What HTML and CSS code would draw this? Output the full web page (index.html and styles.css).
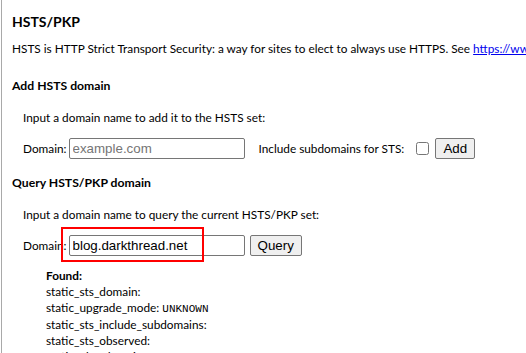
FILE: index.html
```html
<!DOCTYPE html>
<html>
<head>
<meta charset="utf-8">
<link rel="stylesheet" href="styles.css">
</head>
<body>
<div class="panel">
  <h2 class="title">HSTS/PKP</h2>
  <p class="desc">HSTS is HTTP Strict Transport Security: a way for sites to elect to always use HTTPS. See <a href="#">https://www.chromium.org/hsts</a></p>

  <section class="section">
    <h3 class="heading">Add HSTS domain</h3>
    <div class="body">
      <p class="hint">Input a domain name to add it to the HSTS set:</p>
      <div class="row">
        <span class="label">Domain:</span>
        <input class="field" type="text" placeholder="example.com">
        <span class="label label-gap">Include subdomains for STS:</span>
        <input class="check" type="checkbox">
        <button class="btn btn-add">Add</button>
      </div>
    </div>
  </section>

  <section class="section">
    <h3 class="heading">Query HSTS/PKP domain</h3>
    <div class="body">
      <p class="hint">Input a domain name to query the current HSTS/PKP set:</p>
      <div class="row row-query">
        <span class="label">Domain:</span>
        <input class="field" type="text" value="blog.darkthread.net">
        <button class="btn btn-query">Query</button>
        <div class="highlight"></div>
      </div>
      <div class="found">
        <div class="found-title">Found:</div>
        <div>static_sts_domain:</div>
        <div>static_upgrade_mode: <span class="mono">UNKNOWN</span></div>
        <div>static_sts_include_subdomains:</div>
        <div>static_sts_observed:</div>
        <div>static_pkp_domain:</div>
        <div>static_pkp_include_subdomains:</div>
      </div>
    </div>
  </section>
</div>
</body>
</html>
```
FILE: styles.css
```css
html, body {
  margin: 0;
  padding: 0;
  height: 100%;
  overflow: hidden;
  background: #fff;
}

body {
  font-family: Lato, "Open Sans", sans-serif;
  font-size: 11.8px;
  line-height: 16px;
  color: #000;
}

.panel {
  margin-left: 1px;
  border-left: 1px solid #a9a9a9;
  padding-left: 10px;
  min-height: 100%;
  box-sizing: border-box;
  overflow: hidden;
}

.title {
  font-size: 14px;
  font-weight: 700;
  line-height: 16px;
  margin: 14px 0 11px;
}

.desc {
  margin: 0 0 21px;
  white-space: nowrap;
}

.desc a {
  color: #0000ee;
  text-decoration: underline;
}

.section + .section {
  margin-top: 16px;
}

.heading {
  font-size: 12.2px;
  font-weight: 700;
  line-height: 16px;
  margin: 0 0 16px;
}

.body {
  padding-left: 11px;
}

.hint {
  margin: 0 0 12px;
}

.row {
  display: flex;
  align-items: center;
  height: 21px;
  position: relative;
}

.label {
  white-space: nowrap;
}

.label-gap {
  margin-left: 14px;
}

.field {
  margin: 0 0 0 2px;
  width: 176px;
  height: 21px;
  box-sizing: border-box;
  border: 1px solid #767676;
  border-radius: 2px;
  padding: 1px 3px;
  font-family: "Liberation Sans", Arial, sans-serif;
  font-size: 13.33px;
  color: #000;
  background: #fff;
  outline: none;
}

.field::placeholder {
  color: #757575;
}

.check {
  margin: 0 0 0 12px;
  width: 13px;
  height: 13px;
}

.btn {
  height: 21px;
  box-sizing: border-box;
  border: 1px solid #767676;
  border-radius: 2px;
  background: #efefef;
  font-family: "Liberation Sans", Arial, sans-serif;
  font-size: 13.33px;
  color: #000;
  padding: 0 7px;
  line-height: 17px;
}

.btn-add {
  margin-left: 6px;
  width: 40px;
}

.btn-query {
  margin-left: 5px;
  width: 52px;
}

.highlight {
  position: absolute;
  left: 38px;
  top: -8px;
  width: 143px;
  height: 35px;
  box-sizing: border-box;
  border: 2px solid #f00;
  pointer-events: none;
}

.found {
  margin: 12px 0 0 23px;
}

.found-title {
  font-weight: 700;
}

.mono {
  font-family: "Liberation Mono", monospace;
  font-size: 11px;
}
```
